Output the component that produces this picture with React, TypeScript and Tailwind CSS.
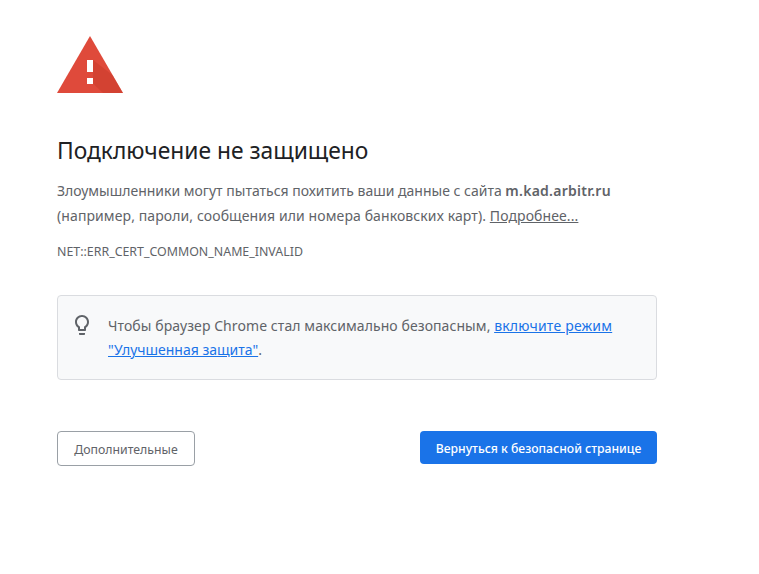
export default function App() {
  return (
    <div className="min-h-[574px] w-[759px] bg-white pl-[57px] pt-[36px] font-['Noto_Sans',sans-serif] text-[#5f6368]">
      <div className="w-[600px]">
        <svg width="66" height="57" viewBox="0 0 66 57" className="block">
          <path d="M33 0 L66 57 L0 57 Z" fill="#df4a3b" />
          <path d="M36 24 L55.5 39 L66 57 L46 57 L30 42 L36 42 Z" fill="#c53929" opacity="0.45" />
          <rect x="30" y="24" width="6" height="12" fill="#fff" />
          <rect x="30" y="42" width="6" height="6" fill="#fff" />
        </svg>
        <h1 className="mt-[43px] text-[22.8px] leading-[30px] font-normal text-[#202124]">Подключение не защищено</h1>
        <p className="mt-[12px] text-[14px] leading-[25px]">
          Злоумышленники могут пытаться похитить ваши данные с сайта <b className="font-semibold tracking-[0.25px]">m.kad.arbitr.ru</b>
          <br />
          <span className="tracking-[0.1px]">
            (например, пароли, сообщения или номера банковских карт). <a className="underline">Подробнее...</a>
          </span>
        </p>
        <p className="mt-[14px] text-[12.4px] leading-[20px]">NET::ERR_CERT_COMMON_NAME_INVALID</p>
        <div className="mt-[33px] flex h-[85px] rounded-[4px] border border-[#dadce0] bg-[#f8f9fa] pl-[12px] pt-[17px]">
          <svg width="24" height="24" viewBox="0 0 24 24" fill="#5f6368" className="shrink-0">
            <path d="M9 21c0 .55.45 1 1 1h4c.55 0 1-.45 1-1v-1H9v1zm3-19C8.14 2 5 5.14 5 9c0 2.38 1.19 4.47 3 5.74V17c0 .55.45 1 1 1h6c.55 0 1-.45 1-1v-2.26c1.81-1.27 3-3.36 3-5.74 0-3.86-3.14-7-7-7zm2.85 11.1l-.85.6V16h-4v-2.3l-.85-.6C7.8 12.16 7 10.63 7 9c0-2.76 2.24-5 5-5s5 2.24 5 5c0 1.63-.8 3.16-2.15 4.1z" />
          </svg>
          <p className="ml-[14px] pt-[1px] text-[14px] leading-[24px]">
            <span className="tracking-[0.08px]">Чтобы браузер Chrome стал максимально безопасным,</span>{" "}
            <a className="tracking-[0.2px] text-[#1a73e8] underline">включите режим</a>
            <br />
            <a className="text-[#1a73e8] underline">"Улучшенная защита"</a>.
          </p>
        </div>
        <div className="mt-[51px] flex items-start justify-between">
          <button className="h-[35px] w-[138px] rounded-[4px] border border-[#9aa0a6] bg-white pt-[3px] text-[12.3px] text-[#5f6368]">Дополнительные</button>
          <button className="h-[33px] w-[237px] rounded-[4px] bg-[#1a73e8] pt-[3px] text-[12.2px] font-medium text-white">Вернуться к безопасной странице</button>
        </div>
      </div>
    </div>
  );
}
